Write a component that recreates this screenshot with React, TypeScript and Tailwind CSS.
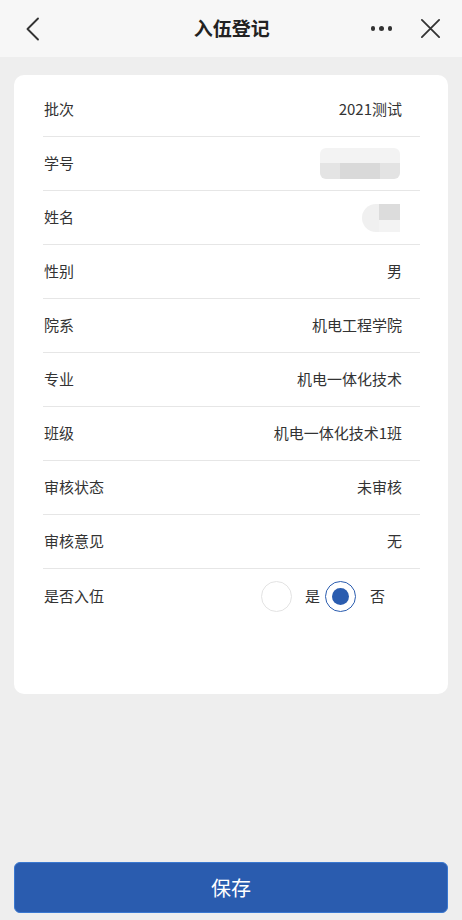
import React, { useState } from "react";

const font = { fontFamily: '"Noto Sans CJK SC", "Noto Sans", sans-serif' };

type Row = { label: string; value?: string; blur?: "wide" | "small" };

const rows: Row[] = [
  { label: "批次", value: "2021测试" },
  { label: "学号", blur: "wide" },
  { label: "姓名", blur: "small" },
  { label: "性别", value: "男" },
  { label: "院系", value: "机电工程学院" },
  { label: "专业", value: "机电一体化技术" },
  { label: "班级", value: "机电一体化技术1班" },
  { label: "审核状态", value: "未审核" },
  { label: "审核意见", value: "无" },
];

function Radio({ checked, onClick }: { checked: boolean; onClick: () => void }) {
  return (
    <button
      onClick={onClick}
      className={`flex h-[31px] w-[31px] items-center justify-center rounded-full border ${
        checked ? "border-[#2a5caf] border-[1.5px]" : "border-[#e3e3e3]"
      } bg-white`}
    >
      {checked && <span className="h-[17px] w-[17px] rounded-full bg-[#2a5caf]" />}
    </button>
  );
}

export default function App() {
  const [enlist, setEnlist] = useState(false);

  return (
    <div className="flex h-[920px] w-[462px] flex-col bg-[#eeeeee] text-[#333333]" style={font}>
      {/* Header */}
      <div className="flex h-[57px] items-center bg-[#f7f7f7] pl-[21px] pr-[20px]">
        <svg width="24" height="24" viewBox="0 0 24 24" fill="none" stroke="#333" strokeWidth="1.9" strokeLinecap="round" strokeLinejoin="round">
          <path d="M17 1.5 L6.5 12 L17 22.5" />
        </svg>
        <div className="ml-[48px] flex-1 text-center text-[19px] font-bold text-[#222]">入伍登记</div>
        <div className="mr-[27px] flex items-center gap-[4px]">
          <span className="h-[4.5px] w-[4.5px] rounded-full bg-[#333]" />
          <span className="h-[4.5px] w-[4.5px] rounded-full bg-[#333]" />
          <span className="h-[4.5px] w-[4.5px] rounded-full bg-[#333]" />
        </div>
        <svg width="23" height="23" viewBox="0 0 24 24" fill="none" stroke="#333" strokeWidth="1.9" strokeLinecap="round">
          <path d="M3 3 L21 21 M21 3 L3 21" />
        </svg>
      </div>

      {/* Card */}
      <div className="mx-[14px] mt-[18px] h-[619px] rounded-[10px] bg-white pt-[8px]">
        <div className="ml-[29px] mr-[28px]">
          {rows.map((r) => (
            <div key={r.label} className="flex h-[54px] items-center justify-between border-b border-[#e6e6e6] text-[15px]">
              <span className="ml-[1px]">{r.label}</span>
              {r.value && <span className="mr-[18px]">{r.value}</span>}
              {r.blur === "wide" && (
                <div className="mr-[20px] flex h-[31px] w-[80px] flex-col overflow-hidden rounded-[6px]">
                  <div className="h-[15px] bg-[#f3f3f3]" />
                  <div className="flex h-[16px]">
                    <div className="w-[20px] bg-[#e4e4e4]" />
                    <div className="w-[40px] bg-[#d9d9d9]" />
                    <div className="w-[20px] bg-[#e3e3e3]" />
                  </div>
                </div>
              )}
              {r.blur === "small" && (
                <div className="mr-[20px] flex h-[28px] w-[38px] overflow-hidden rounded-l-full rounded-r-[8px]">
                  <div className="w-[17px] bg-[#f0f0f0]" />
                  <div className="flex w-[21px] flex-col">
                    <div className="h-[16px] bg-[#dcdcdc]" />
                    <div className="h-[12px] bg-[#f3f3f3]" />
                  </div>
                </div>
              )}
            </div>
          ))}
          <div className="flex h-[54px] items-center justify-between text-[15px]">
            <span className="ml-[1px]">是否入伍</span>
            <div className="mr-[35px] flex items-center">
              <Radio checked={enlist} onClick={() => setEnlist(true)} />
              <span className="ml-[13px] mr-[5px]">是</span>
              <Radio checked={!enlist} onClick={() => setEnlist(false)} />
              <span className="ml-[14px]">否</span>
            </div>
          </div>
        </div>
      </div>

      <div className="flex-1" />

      {/* Save button */}
      <div className="px-[14px] pb-[7px]">
        <button className="h-[51px] w-full rounded-[6px] border border-[#3a78d0] bg-[#2a5caf] text-[20px] text-white">
          保存
        </button>
      </div>
    </div>
  );
}
